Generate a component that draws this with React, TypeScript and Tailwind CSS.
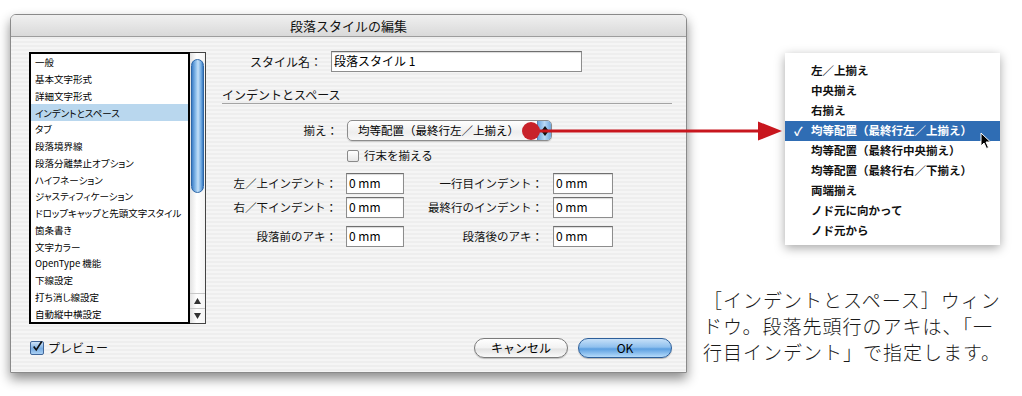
import React from "react";

const jp = "font-['Noto_Sans_CJK_JP','Noto_Sans',sans-serif]";

const listItems = [
  "一般",
  "基本文字形式",
  "詳細文字形式",
  "インデントとスペース",
  "タブ",
  "段落境界線",
  "段落分離禁止オプション",
  "ハイフネーション",
  "ジャスティフィケーション",
  "ドロップキャップと先頭文字スタイル",
  "箇条書き",
  "文字カラー",
  "OpenType 機能",
  "下線設定",
  "打ち消し線設定",
  "自動縦中横設定",
];

const menuItems = [
  "左／上揃え",
  "中央揃え",
  "右揃え",
  "均等配置（最終行左／上揃え）",
  "均等配置（最終行中央揃え）",
  "均等配置（最終行右／下揃え）",
  "両端揃え",
  "ノド元に向かって",
  "ノド元から",
];

const Field = ({ value, w }: { value: string; w: string }) => (
  <div
    className={`${w} h-[21px] bg-white border border-[#8d8d8d] border-t-[#6f6f6f] shadow-[inset_0_1px_1px_rgba(0,0,0,0.15)] pl-[2px] text-[12px] leading-[17px] text-black`}
  >
    {value}
  </div>
);

const IndentRow = ({
  left,
  right,
  className,
}: {
  left: string;
  right: string;
  className: string;
}) => (
  <div className={`flex items-center h-[21px] ${className}`}>
    <div className="w-[115px] text-right text-[11.5px] text-[#111]">{left}</div>
    <div className="ml-[9px]">
      <Field value="0 mm" w="w-[58px]" />
    </div>
    <div className="w-[139px] text-right text-[11.5px] text-[#111]">{right}</div>
    <div className="ml-[10px]">
      <Field value="0 mm" w="w-[60px]" />
    </div>
  </div>
);

const App = () => {
  return (
    <div className={`relative w-[1022px] h-[396px] bg-white overflow-hidden flex ${jp}`}>
      {/* dialog */}
      <div className="ml-[10px] mt-[14px] w-[677px] h-[359px] flex flex-col border border-[#8a8a8a] rounded-t-[6px] shadow-[0_6px_12px_rgba(0,0,0,0.45)] overflow-hidden">
        <div className="h-[22px] shrink-0 flex items-center justify-center border-b border-[#9d9d9d] bg-[linear-gradient(180deg,#f0f0f0,#d9d9d9)] text-[13px] text-[#111]">
          段落スタイルの編集
        </div>

        <div className="flex-1 flex flex-col pl-[18px] pr-[14px] bg-[repeating-linear-gradient(180deg,#eeeeee_0px,#eeeeee_2px,#f5f5f5_2px,#f5f5f5_4px)]">
          <div className="flex pt-[15px]">
            {/* list */}
            <div className="flex h-[272px] w-[177px] shrink-0">
              <div className="flex-1 border-2 border-black bg-white flex flex-col [font-feature-settings:'palt']">
                {listItems.map((item, i) => (
                  <div
                    key={item}
                    className={`h-[16.75px] flex items-center pl-[4px] text-[9.5px] text-black whitespace-nowrap ${
                      i === 3 ? "bg-[#b9d7ee]" : ""
                    }`}
                  >
                    {item}
                  </div>
                ))}
              </div>
              {/* scrollbar */}
              <div className="w-[16px] border border-l-0 border-[#444] bg-[linear-gradient(90deg,#e2e2e2,#ffffff_45%,#f4f4f4)] flex flex-col">
                <div className="mx-[1px] mt-[6px] h-[134px] rounded-full border border-[#2d67a8] bg-[linear-gradient(90deg,#3d7fc8,#8fc0ec_35%,#c4e0f8_55%,#6aa6e0_85%,#3a78c0)]" />
                <div className="flex-1" />
                <div className="h-[15px] border-t border-[#c8c8c8] flex items-center justify-center">
                  <svg width="7" height="6" viewBox="0 0 7 6">
                    <polygon points="3.5,0 7,6 0,6" fill="#333" />
                  </svg>
                </div>
                <div className="h-[15px] border-t border-[#c8c8c8] flex items-center justify-center">
                  <svg width="7" height="6" viewBox="0 0 7 6">
                    <polygon points="0,0 7,0 3.5,6" fill="#333" />
                  </svg>
                </div>
              </div>
            </div>

            {/* form */}
            <div className="ml-[16px] w-[450px] flex flex-col -mt-[1px]">
              <div className="flex items-center h-[21px]">
                <div className="w-[100px] text-right text-[12px] text-[#111]">スタイル名：</div>
                <div className="ml-[9px]">
                  <Field value="段落スタイル 1" w="w-[251px]" />
                </div>
              </div>

              <div className="mt-[15px] h-[17px] leading-[15px] border-b border-[#a4a4a4] text-[12px] text-[#111]">
                インデントとスペース
              </div>

              <div className="mt-[16px] flex items-center h-[21px]">
                <div className="w-[116px] text-right text-[11.5px] text-[#111]">揃え：</div>
                <div className="ml-[9px] w-[205px] h-[21px] flex rounded-[5px] border border-[#8c8c8c] bg-[linear-gradient(180deg,#ffffff,#eeeeee_60%,#f8f8f8)] shadow-[0_1px_1px_rgba(0,0,0,0.15)] overflow-hidden">
                  <div className="flex-1 pl-[10px] text-[11.5px] leading-[19px] text-black whitespace-nowrap">
                    均等配置（最終行左／上揃え）
                  </div>
                  <div className="w-[14px] border-l border-[#5a86b8] bg-[linear-gradient(90deg,#6ea6dd,#b9d9f5_50%,#6ea6dd)] flex flex-col items-center justify-center gap-[2px]">
                    <svg width="6" height="4" viewBox="0 0 6 4">
                      <polygon points="3,0 6,4 0,4" fill="#111" />
                    </svg>
                    <svg width="6" height="4" viewBox="0 0 6 4">
                      <polygon points="0,0 6,0 3,4" fill="#111" />
                    </svg>
                  </div>
                </div>
              </div>

              <div className="mt-[8px] pl-[125px] flex items-center h-[13px]">
                <div className="w-[12px] h-[12px] border border-[#8a8a8a] rounded-[2px] bg-[linear-gradient(180deg,#ffffff,#e6e6e6)]" />
                <span className="ml-[5px] text-[11.5px] text-[#111]">行末を揃える</span>
              </div>

              <IndentRow left="左／上インデント：" right="一行目インデント：" className="mt-[11px]" />
              <IndentRow left="右／下インデント：" right="最終行のインデント：" className="mt-[3px]" />
              <IndentRow left="段落前のアキ：" right="段落後のアキ：" className="mt-[8px]" />
            </div>
          </div>

          {/* bottom row */}
          <div className="mt-auto mb-[14px] h-[20px] flex items-center">
            <div className="ml-[1px] w-[14px] h-[14px] rounded-[2px] border border-[#41679a] bg-[linear-gradient(180deg,#cfe3f7,#78ade3_55%,#a9cff3)] flex items-center justify-center">
              <svg width="13" height="13" viewBox="0 0 13 13" className="-mt-[3px] ml-[1px]">
                <path d="M2 6.5 L5 10.5 L11.5 0.5" stroke="#111" strokeWidth="2" fill="none" />
              </svg>
            </div>
            <span className="ml-[4px] text-[12px] text-[#111]">プレビュー</span>
            <div className="ml-auto flex gap-[10px]">
              <div className="w-[94px] h-[20px] rounded-full border border-[#7b7b7b] bg-[linear-gradient(180deg,#ffffff,#f2f2f2_50%,#e2e2e2_55%,#fafafa)] flex items-center justify-center text-[12px] text-black shadow-[0_1px_1px_rgba(0,0,0,0.2)]">
                キャンセル
              </div>
              <div className="w-[94px] h-[20px] rounded-full border border-[#2d5f9a] bg-[linear-gradient(180deg,#c6e0f8,#8fc0ee_45%,#5c9fe0_55%,#b5dbfb)] flex items-center justify-center text-[12px] text-black shadow-[0_1px_1px_rgba(0,0,0,0.25)]">
                OK
              </div>
            </div>
          </div>
        </div>
      </div>

      {/* right side: popup menu and caption */}
      <div className="flex-1 flex flex-col">
        <div className="relative ml-[98px] mt-[53px] w-[215px] h-[192px] pt-[8px] bg-white shadow-[0_3px_10px_rgba(0,0,0,0.35)] flex flex-col">
          {menuItems.map((item, i) => (
            <div
              key={item}
              className={`relative h-[20px] flex items-center pl-[26px] text-[11.5px] font-bold whitespace-nowrap ${
                i === 3 ? "bg-[#2f6db4] text-white" : "text-[#111]"
              }`}
            >
              {i === 3 && <span className="absolute left-[9px] text-[12px]">✓</span>}
              {item}
            </div>
          ))}
        </div>

        <div className="ml-[16px] mt-[42px] text-[19px] font-light tracking-[1px] leading-[26px] text-[#1a1a1a] whitespace-nowrap">
          <div>［インデントとスペース］ウィン</div>
          <div>ドウ。段落先頭行のアキは、「一</div>
          <div>行目インデント」で指定します。</div>
        </div>
      </div>

      {/* red pointer arrow */}
      <svg className="absolute left-[520px] top-[118px]" width="265" height="26" viewBox="0 0 265 26">
        <line x1="11" y1="13" x2="242" y2="13" stroke="#c8161e" strokeWidth="3" />
        <polygon points="238,3.5 262,13 238,22.5" fill="#c8161e" />
        <circle cx="11" cy="13" r="9" fill="#c8222a" />
      </svg>

      {/* mouse cursor */}
      <svg className="absolute left-[980px] top-[132px]" width="12" height="18" viewBox="0 0 12 18">
        <path d="M1 1 L1 14 L4 11 L6.5 16.5 L8.5 15.5 L6 10 L10.5 10 Z" fill="#000" stroke="#fff" strokeWidth="1" />
      </svg>
    </div>
  );
};

export default App;
